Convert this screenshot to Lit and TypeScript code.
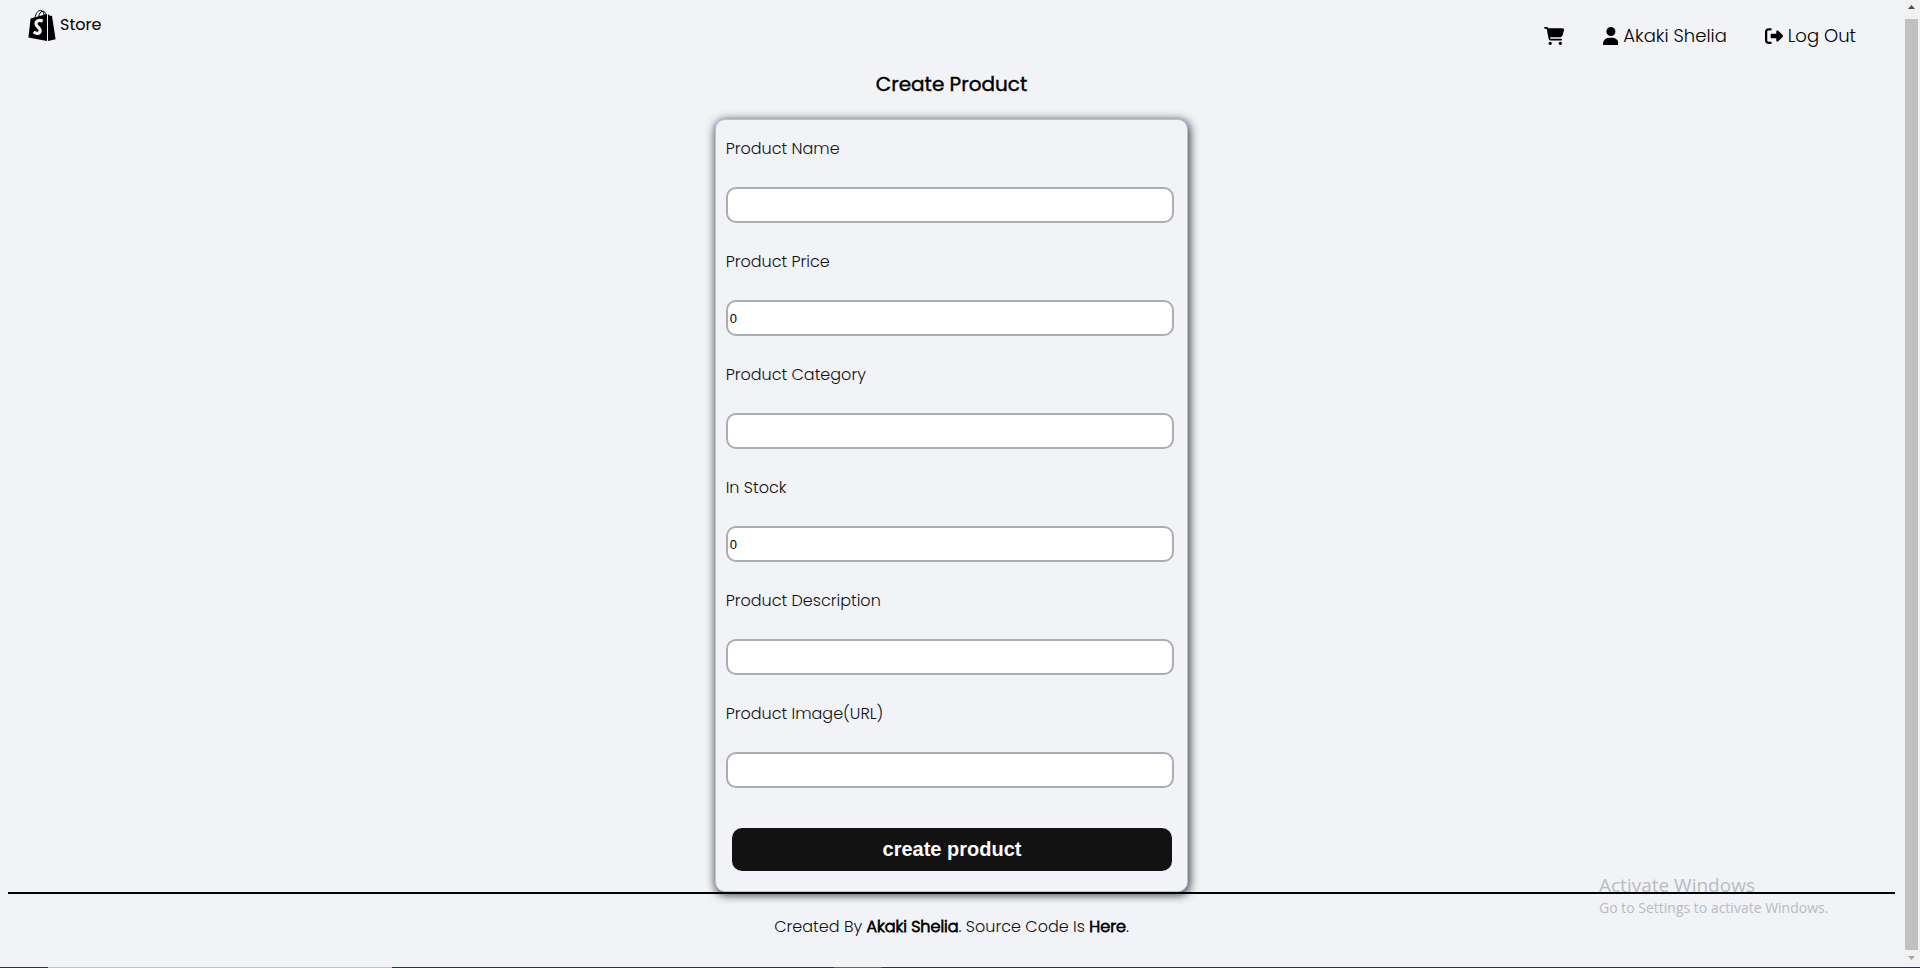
import { LitElement, html, css, svg } from "lit";
import { customElement, property } from "lit/decorators.js";

const ICONS = {
  cart: {
    box: "0 0 576 512",
    d: "M0 24C0 10.7 10.7 0 24 0H69.5c22 0 41.5 12.8 50.6 32h411c26.3 0 45.5 25 38.6 50.4l-41 152.3c-8.5 31.4-37 53.3-69.5 53.3H170.7l5.4 28.5c2.2 11.3 12.1 19.5 23.6 19.5H488c13.3 0 24 10.7 24 24s-10.7 24-24 24H199.7c-34.6 0-64.3-24.6-70.7-58.5L77.4 54.5c-.7-3.8-4-6.5-7.9-6.5H24C10.7 48 0 37.3 0 24zM128 464a48 48 0 1 1 96 0 48 48 0 1 1 -96 0zm336-48a48 48 0 1 1 0 96 48 48 0 1 1 0-96z",
  },
  user: {
    box: "0 0 448 512",
    d: "M224 256A128 128 0 1 0 224 0a128 128 0 1 0 0 256zm-45.7 48C79.8 304 0 383.8 0 482.3C0 498.7 13.3 512 29.7 512H418.3c16.4 0 29.7-13.3 29.7-29.7C448 383.8 368.2 304 269.7 304H178.3z",
  },
  logout: {
    box: "0 0 512 512",
    d: "M377.9 105.9L500.7 228.7c7.2 7.2 11.3 17.1 11.3 27.3s-4.1 20.1-11.3 27.3L377.9 406.1c-6.4 6.4-15 9.9-24 9.9c-18.7 0-33.9-15.2-33.9-33.9l0-62.1-128 0c-17.7 0-32-14.3-32-32l0-64c0-17.7 14.3-32 32-32l128 0 0-62.1c0-18.7 15.2-33.9 33.9-33.9c9 0 17.6 3.6 24 9.9zM160 96L96 96c-17.7 0-32 14.3-32 32l0 256c0 17.7 14.3 32 32 32l64 0c17.7 0 32 14.3 32 32s-14.3 32-32 32l-64 0c-53 0-96-43-96-96L0 128C0 75 43 32 96 32l64 0c17.7 0 32 14.3 32 32s-14.3 32-32 32z",
  },
};

@customElement("store-icon")
class StoreIcon extends LitElement {
  @property() name: keyof typeof ICONS = "cart";

  static styles = css`
    :host {
      display: inline-flex;
    }
    .glyph {
      height: 18px;
      width: auto;
      fill: #000;
    }
  `;

  render() {
    const icon = ICONS[this.name];
    return html`<svg class="glyph" viewBox=${icon.box} aria-hidden="true">${svg`<path d=${icon.d}></path>`}</svg>`;
  }
}

@customElement("store-header")
class StoreHeader extends LitElement {
  static styles = css`
    :host {
      display: flex;
      justify-content: space-between;
      align-items: flex-start;
      padding: 0 39px 0 20px;
      height: 58px;
    }
    a {
      color: #000;
      text-decoration: none;
      display: flex;
      align-items: center;
    }
    .brand {
      gap: 4px;
      font-size: 16px;
      line-height: 34px;
    }
    .logo {
      width: 28px;
      height: 32px;
    }
    .nav {
      display: flex;
      gap: 38px;
      padding-top: 14px;
      font-size: 18px;
      font-weight: 300;
      line-height: 28px;
    }
    .nav a {
      gap: 5px;
    }
  `;

  render() {
    return html`
      <a class="brand" href="#">
        <svg class="logo" viewBox="0 0 28 32" aria-hidden="true">
          <path d="M2.6 9.4 L19 5 V32 L0.4 28.6 Z" fill="#000"></path>
          <path d="M20 5 L21.4 6.6 L24 7 L27.6 30.2 L20 32 Z" fill="#000"></path>
          <path
            d="M7 9 C7.6 4.6 10 1.4 12.6 1.4 C15 1.4 16 4 16 7 M10.6 8 C11 5 12.6 2.4 14.6 2.2 C16.6 2.2 17.6 4 18 6"
            fill="none"
            stroke="#000"
            stroke-width="1"
          ></path>
          <path
            d="M14.6 12.2 C11.4 10.6 8 11.8 8 14.8 C8 18.4 12.2 18.2 12.2 21.6 C12.2 25 8.6 25.2 5.6 23"
            fill="none"
            stroke="#f1f3f7"
            stroke-width="3.2"
          ></path>
        </svg>
        <span>Store</span>
      </a>
      <nav class="nav">
        <a href="#cart" aria-label="Cart"><store-icon name="cart"></store-icon></a>
        <a href="#profile"><store-icon name="user"></store-icon><span>Akaki Shelia</span></a>
        <a href="#logout"><store-icon name="logout"></store-icon><span>Log Out</span></a>
      </nav>
    `;
  }
}

interface Field {
  id: string;
  label: string;
  type: "text" | "number";
  value: string;
}

const FIELDS: Field[] = [
  { id: "name", label: "Product Name", type: "text", value: "" },
  { id: "price", label: "Product Price", type: "number", value: "0" },
  { id: "category", label: "Product Category", type: "text", value: "" },
  { id: "stock", label: "In Stock", type: "number", value: "0" },
  { id: "description", label: "Product Description", type: "text", value: "" },
  { id: "image", label: "Product Image(URL)", type: "text", value: "" },
];

@customElement("product-form")
class ProductForm extends LitElement {
  static styles = css`
    :host {
      display: block;
      width: calc(25% + 2px);
      min-width: 300px;
      margin: 0 auto;
    }
    .card {
      display: flex;
      flex-direction: column;
      gap: 27px;
      padding: 17px 13px 20px 10px;
      border: 1px solid #adc2f5;
      border-radius: 10px;
      box-shadow: 1px 2px 10px 1px rgba(0, 0, 0, 0.75);
      background: #f1f3f7;
    }
    .field {
      display: flex;
      flex-direction: column;
      gap: 26px;
    }
    .label {
      font-size: 16px;
      font-weight: 300;
      line-height: 24px;
      color: #111;
    }
    .input {
      box-sizing: border-box;
      width: 100%;
      height: 36px;
      padding: 1px 2px;
      border: 2px solid #acacb6;
      border-radius: 10px;
      background: #fff;
      color: #000;
      font: 13px "Liberation Sans", Arial, sans-serif;
    }
    .submit {
      height: 43px;
      margin: 13px 2px 0 6px;
      border: 0;
      border-radius: 10px;
      background: #121212;
      color: #fff;
      font: bold 20px "Liberation Sans", Arial, sans-serif;
    }
  `;

  private onSubmit(event: Event) {
    event.preventDefault();
  }

  render() {
    return html`
      <form class="card" @submit=${this.onSubmit}>
        ${FIELDS.map(
          (f) => html`
            <div class="field">
              <label class="label" for=${f.id}>${f.label}</label>
              <input class="input" id=${f.id} type=${f.type} .value=${f.value} />
            </div>
          `,
        )}
        <button class="submit" type="submit">create product</button>
      </form>
    `;
  }
}

@customElement("page-scrollbar")
class PageScrollbar extends LitElement {
  static styles = css`
    :host {
      display: flex;
      flex-direction: column;
      align-items: center;
      background: #f1f1f1;
    }
    .arrow {
      width: 17px;
      height: 17px;
      flex: none;
    }
    .up {
      fill: #505050;
    }
    .down {
      fill: #a3a3a3;
    }
    .thumb {
      flex: 1;
      width: 13px;
      margin: 2px 0 0;
      background: #c1c1c1;
    }
  `;

  render() {
    return html`
      <svg class="arrow up" viewBox="0 0 17 17" aria-hidden="true"><path d="M5 9 L8.5 5 L12 9 Z"></path></svg>
      <div class="thumb"></div>
      <svg class="arrow down" viewBox="0 0 17 17" aria-hidden="true"><path d="M5 6 L12 6 L8.5 10 Z"></path></svg>
    `;
  }
}

@customElement("app-root")
class AppRoot extends LitElement {
  static styles = css`
    :host {
      display: grid;
      grid-template-columns: 1fr 17px;
      grid-template-rows: 1fr 1px;
      position: relative;
      min-height: 100vh;
      background: #f1f3f7;
      color: #000;
      font-family: Poppins, Inter, "Open Sans", sans-serif;
    }
    .page {
      padding: 8px 8px 0;
    }
    .title {
      margin: 0 0 20px;
      padding-top: 3px;
      font-size: 20px;
      font-weight: 400;
      line-height: 30px;
      text-align: center;
      -webkit-text-stroke: 0.02em #000;
    }
    .footer {
      position: relative;
      z-index: 1;
      border-top: 2px solid #000;
      padding: 21px 0;
      font-size: 16px;
      font-weight: 300;
      line-height: 24px;
      text-align: center;
    }
    .footer p {
      margin: 0;
      color: #111;
    }
    .footer a {
      color: #000;
      text-decoration: none;
      -webkit-text-stroke: 0.05em #000;
    }
    .watermark {
      position: absolute;
      right: 85px;
      bottom: 50px;
      width: 236px;
      font-family: "Open Sans", "Noto Sans", sans-serif;
      color: #b9bbbf;
    }
    .watermark p {
      margin: 0;
    }
    .heading {
      font-size: 19px;
      line-height: 26px;
    }
    .hint {
      font-size: 14px;
      line-height: 20px;
    }
    .edge {
      grid-column: 1 / -1;
      display: grid;
      grid-template-columns: 48fr 344fr 442fr 48fr 1038fr;
      background: #26303f;
    }
    .tab {
      background: #bfc1c5;
      grid-column: 2;
    }
    .tab-dim {
      background: #5a646c;
      grid-column: 4;
    }
  `;

  render() {
    return html`
      <div class="page">
        <store-header></store-header>
        <main>
          <h1 class="title">Create Product</h1>
          <product-form></product-form>
        </main>
        <footer class="footer">
          <p>Created By <a href="#author">Akaki Shelia</a>. Source Code Is <a href="#source">Here</a>.</p>
        </footer>
      </div>
      <page-scrollbar></page-scrollbar>
      <div class="edge"><span class="tab"></span><span class="tab-dim"></span></div>
      <div class="watermark">
        <p class="heading">Activate Windows</p>
        <p class="hint">Go to Settings to activate Windows.</p>
      </div>
    `;
  }
}
